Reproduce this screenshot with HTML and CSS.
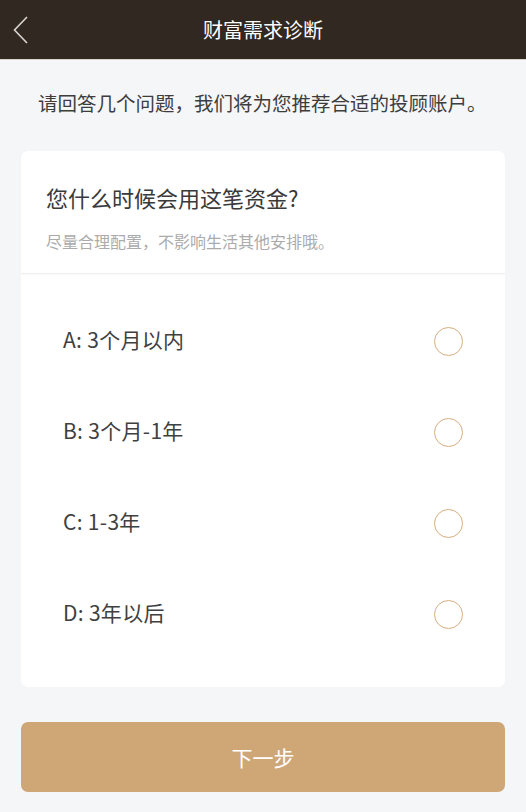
FILE: index.html
```html
<!DOCTYPE html>
<html lang="zh-CN">
<head>
<meta charset="utf-8">
<title>财富需求诊断</title>
<link rel="stylesheet" href="styles.css">
</head>
<body>
<header class="topbar">
  <span class="back">
    <svg width="16" height="28" viewBox="0 0 16 28"><path d="M14 1 L1.5 14 L14 27" fill="none" stroke="#d9d5d1" stroke-width="1.6"/></svg>
  </span>
  <h1 class="title">财富需求诊断</h1>
</header>
<p class="intro">请回答几个问题，我们将为您推荐合适的投顾账户。</p>
<section class="card">
  <div class="card-head">
    <h2 class="question">您什么时候会用这笔资金?</h2>
    <p class="hint">尽量合理配置，不影响生活其他安排哦。</p>
  </div>
  <ul class="options">
    <li class="option"><span class="label">A: 3个月以内</span><i class="radio"></i></li>
    <li class="option"><span class="label">B: 3个月-1年</span><i class="radio"></i></li>
    <li class="option"><span class="label">C: 1-3年</span><i class="radio"></i></li>
    <li class="option"><span class="label">D: 3年以后</span><i class="radio"></i></li>
  </ul>
</section>
<button class="next">下一步</button>
</body>
</html>
```
FILE: styles.css
```css
* { box-sizing: border-box; }
body {
  margin: 0;
  background: #f5f6f8;
  font-family: "Noto Sans CJK SC", "Noto Sans", sans-serif;
  color: #3d3d3d;
}
.topbar {
  height: 60px;
  background: #312821;
  border-bottom: 1px solid #d9d3cc;
  display: flex;
  align-items: center;
  justify-content: center;
  position: relative;
}
.back {
  position: absolute;
  left: 13px;
  top: 16px;
  display: flex;
}
.title {
  margin: 0;
  font-size: 20px;
  font-weight: 400;
  color: #fff;
  line-height: 28px;
}
.intro {
  margin: 0;
  padding: 29px 0 0 38px;
  font-size: 19.5px;
  line-height: 28px;
  color: #3d3d3d;
}
.card {
  margin: 34px 21px 0;
  background: #fff;
  border-radius: 7px;
}
.card-head {
  padding: 31px 25px 21px;
  border-bottom: 1px solid #eeeeee;
  box-shadow: 0 1px 2px rgba(0,0,0,0.03);
}
.question {
  margin: 0;
  font-size: 22px;
  font-weight: 400;
  line-height: 30px;
  color: #3a3a3a;
}
.hint {
  margin: 18px 0 0;
  font-size: 16px;
  line-height: 22px;
  color: #ababab;
}
.options {
  list-style: none;
  margin: 0;
  padding: 22px 42px 27px;
}
.option {
  height: 91px;
  display: flex;
  align-items: center;
  justify-content: space-between;
  font-size: 21px;
  color: #404040;
}
.label {
  padding-bottom: 6px;
  letter-spacing: 0.3px;
}
.radio {
  width: 29px;
  height: 29px;
  border: 1.6px solid #d6ae80;
  border-radius: 50%;
}
.next {
  display: block;
  width: 484px;
  height: 70px;
  margin: 35px 21px 0;
  border: none;
  border-radius: 7px;
  background: #cfa777;
  color: #fff;
  font-family: inherit;
  font-size: 21px;
}
```
